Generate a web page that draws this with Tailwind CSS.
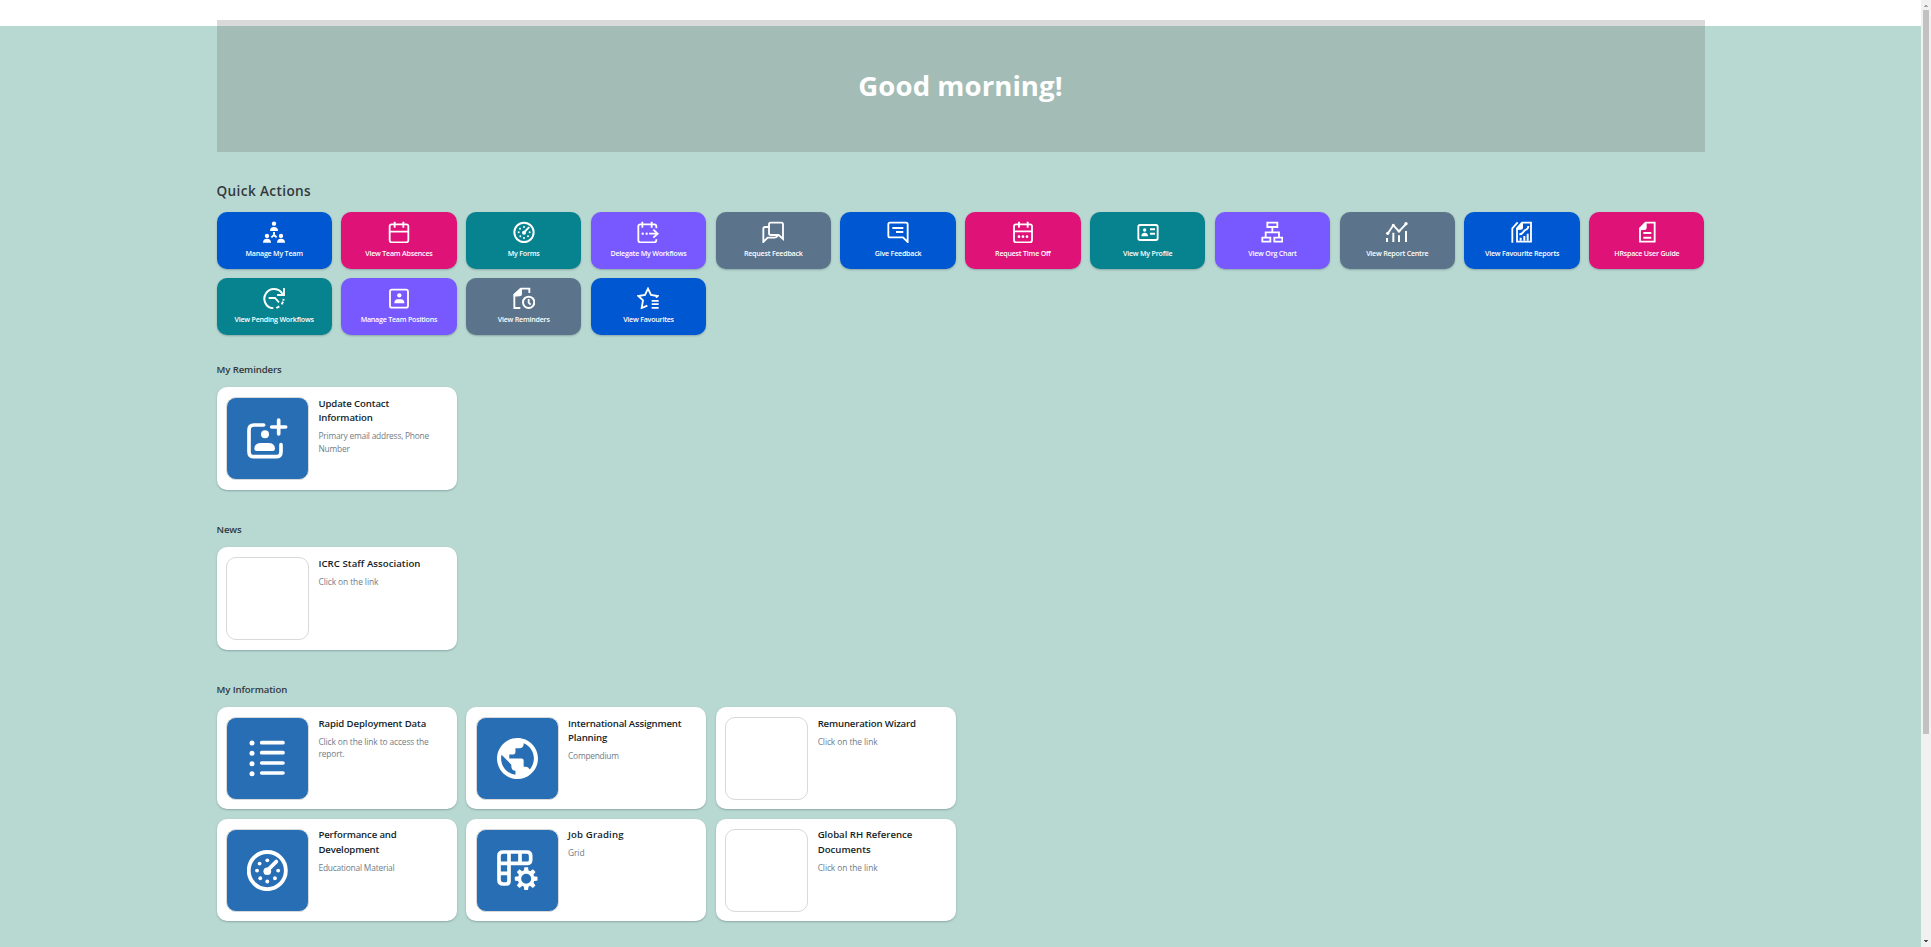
<!DOCTYPE html>
<html lang="en">
<head>
<meta charset="utf-8">
<title>Home</title>
<script src="https://cdn.jsdelivr.net/npm/@tailwindcss/browser@4"></script>
</head>
<body class="h-[947px] overflow-hidden bg-white font-['Open_Sans','Noto_Sans',sans-serif]">
<div class="flex h-[947px]">
<div class="w-[1921px] shrink-0 bg-linear-to-b from-white from-[26px] to-[#b8d9d1] to-[26px] px-[216.5px] pt-5">

<header class="flex h-[132px] items-center justify-center bg-[#676767]/25">
<h1 class="pb-[1px] text-[27.6px] font-bold leading-none text-white tracking-[0.05px]">Good morning!</h1>
</header>

<section class="pt-[29px]">
<h2 class="h-[31px] text-[13.6px] leading-5 font-semibold text-[#32383f] tracking-[0.38px]">Quick Actions</h2>
<div id="tiles" class="grid grid-cols-12 gap-x-[9.6px] gap-y-[9px]"></div>
</section>

<main id="sections"></main>
</div>

<aside class="flex h-full w-[10px] flex-col items-center bg-[#f1f1f1]">
<svg class="mt-[5px] h-[2px] w-[4px] shrink-0" viewBox="0 0 4 2" shape-rendering="crispEdges"><path fill="#a3a3a3" d="M1 0h2v1h1v1H0V1h1z"/></svg>
<div class="mt-[3px] h-[724px] w-[6px] shrink-0 bg-[#c1c1c1]"></div>
<svg class="mt-auto mb-[5px] h-[2px] w-[4px] shrink-0" viewBox="0 0 4 2" shape-rendering="crispEdges"><path fill="#505050" d="M0 0h4v1H3v1H1V1H0z"/></svg>
</aside>
</div>

<script>
const S = 'fill="none" stroke="#fff" stroke-width="6"';
const T = 'fill="none" stroke="#fff" stroke-width="5.5"';
const gauge = `<circle cx="33" cy="34" r="29" ${S}/><path d="M33 34L47 20" ${S} stroke-linecap="round"/><circle cx="33" cy="35" r="6"/><g><circle cx="33" cy="18" r="3"/><circle cx="21" cy="23" r="3"/><circle cx="17" cy="34" r="3"/><circle cx="50" cy="34" r="3"/><circle cx="22" cy="46" r="3"/><circle cx="33" cy="51" r="3"/><circle cx="45" cy="46" r="3"/></g>`;
const icons = {
team: `<circle cx="33" cy="8" r="6.5"/><path d="M21 30q0-12 12-12t12 12zM0 65q0-12 12-12t12 12zM42 65q0-12 12-12t12 12z"/><circle cx="12" cy="45" r="6.5"/><circle cx="54" cy="45" r="6.5"/><path d="M33 33v9L25 49M33 42l8 7" ${T}/>`,
cal: `<path d="M11 10h44q6 0 6 6v42q0 6-6 6H11q-6 0-6-6V16q0-6 6-6zM5 32h56M20 2v18M46 2v18" ${T}/>`,
gauge,
delegate: `<path d="M58 22v-6q0-6-6-6H10q-6 0-6 6v42q0 6 6 6h42q6 0 6-6v-3M16 2v18M44 2v18M36 38h26M49 26l13 12-13 12" ${T}/><circle cx="17" cy="38" r="3.5"/><circle cx="29" cy="38" r="3.5"/>`,
chat: `<path d="M26 5h32q5 0 5 5v44L50 42H26q-5 0-5-5V10q0-5 5-5zM20 18H9q-5 0-5 5v40l13-13h20q6 0 10-6" ${T}/>`,
comment: `<path d="M9 5h48q5 0 5 5v53L48 49H9q-5 0-5-5V10q0-5 5-5z" ${T}/><path d="M16 21h33M27 33h22" ${T}/>`,
caldots: `<path d="M12 10h42q6 0 6 6v42q0 6-6 6H12q-6 0-6-6V16q0-6 6-6zM6 31h54M21 2v18M47 2v18" ${T}/><circle cx="21" cy="47" r="4"/><circle cx="33" cy="47" r="4"/><circle cx="45" cy="47" r="4"/>`,
profile: `<path d="M9 12h48q5 0 5 5v35q0 5-5 5H9q-5 0-5-5V17q0-5 5-5z" ${T}/><circle cx="23" cy="27" r="5"/><path d="M13 46q0-11 10-11t10 11zM39 22h15v6H39zM39 35h15v6H39z"/>`,
org: `<path d="M19 5h30v13H19zM4 50h24v12H4zM40 50h24v12H40zM34 18v16M14 48V34h40v14" ${T}/>`,
report: `<path d="M5 38L22 13l17 18L60 9" ${T}/><circle cx="5" cy="37" r="5"/><circle cx="22" cy="13" r="4.5"/><circle cx="39" cy="30" r="4.5"/><circle cx="60" cy="8" r="5"/><path d="M3 51v12M22 35v28M39 43v20M60 30v33" ${S}/>`,
favrep: `<path d="M18 62V23L33 5h27v57z" ${T}/><path d="M16 27V21L32 4h4v16q0 6-6 6z"/><path d="M4 65V22L20 4" ${T}/><path d="M25 40q8 0 12-7t8-7q6-2 7-11M29 50v9M40 45v14M50 38v21" ${S} stroke-width="5"/>`,
doc: `<path d="M12 62V22L29 5h27v57z" ${T}/><path d="M10 28v-6L28 3h4v17q0 7-7 7zM22 33h24v6H22zM22 47h24v6H22z"/>`,
pending: `<path d="M31 64A29 29 0 1 1 59 22M40 63l9-5M56 52l4-8M61 41l1-5" ${S}/><path d="M63 3v21H42M17 33h19l12 13" ${T}/>`,
position: `<path d="M12 8h42q6 0 6 6v42q0 6-6 6H12q-6 0-6-6V14q0-6 6-6z" ${T}/><circle cx="34" cy="25" r="6.5"/><path d="M19 49q0-12 10-12h10q10 0 10 12z"/>`,
remind: `<path d="M22 63H4V23L24 5h25v13" ${T}/><path d="M2 29v-7L22 3h5v18q0 7-7 7z"/><circle cx="47" cy="46" r="17" ${S}/><path d="M47 36v11l6 6" ${T}/>`,
star: `<path d="M31 56L14 63l4-23L4 27l20-3 9-19 9 19 20 3-5 5" ${T}/><path d="M44 39h21v5H44zM44 49h21v5H44zM44 60h21v5H44z"/>`,
};
const blue='bg-[#0057d2]', pink='bg-[#df1278]', teal='bg-[#07838f]', violet='bg-[#7858ff]', slate='bg-[#5b738b]';
const tiles = [
['Manage My Team',blue,'team'],['View Team Absences',pink,'cal'],['My Forms',teal,'gauge'],['Delegate My Workflows',violet,'delegate'],
['Request Feedback',slate,'chat'],['Give Feedback',blue,'comment'],['Request Time Off',pink,'caldots'],['View My Profile',teal,'profile'],
['View Org Chart',violet,'org'],['View Report Centre',slate,'report'],['View Favourite Reports',blue,'favrep'],['HRspace User Guide',pink,'doc'],
['View Pending Workflows',teal,'pending'],['Manage Team Positions',violet,'position'],['View Reminders',slate,'remind'],['View Favourites',blue,'star'],
];
document.getElementById('tiles').innerHTML = tiles.map(([t,c,i]) => `
<a class="flex h-[57px] flex-col items-center rounded-[10px] pt-[9px] text-white shadow-[0_1px_2px_rgba(34,53,72,0.3)] ${c}">
<svg class="h-[22px] w-[22px]" viewBox="0 0 66 66" fill="#fff">${icons[i]}</svg>
<span class="mt-[5px] text-[7.1px] leading-[10px] font-semibold whitespace-nowrap tracking-[-0.22px]">${t}</span>
</a>`).join('');

const B = 'fill="none" stroke="#fff" stroke-width="11" stroke-linecap="round"';
const teeth = [0,45,90,135,180,225,270,315].map(a => `<path d="M82 52h11l2 12H80z" transform="rotate(${a} 87.5 86)"/>`).join('');
const big = {
contact: `<path d="M50 21H21q-15 0-15 15v65q0 15 15 15h66q15 0 15-15V80" ${B}/><circle cx="54" cy="49" r="12"/><path d="M22 92q0-17 21-17h21q20 0 20 17q0 7-7 7H29q-7 0-7-7z"/><path d="M95 6v42M74 27h42" ${B}/>`,
list: `<circle cx="15" cy="15" r="7.5"/><circle cx="15" cy="46" r="7.5"/><circle cx="15" cy="77" r="7.5"/><circle cx="15" cy="107" r="7.5"/><path d="M44 14h64M44 44h64M44 75h64M44 105h64" ${B}/>`,
globe: `<path transform="scale(6.15) translate(-2 -2)" d="M12 2C6.48 2 2 6.48 2 12s4.48 10 10 10 10-4.48 10-10S17.52 2 12 2zm-1 17.93c-3.95-.49-7-3.85-7-7.93 0-.62.08-1.21.21-1.79L9 15v1c0 1.1.9 2 2 2v1.93zm6.9-2.54c-.26-.81-1-1.39-1.9-1.39h-1v-3c0-.55-.45-1-1-1H8v-2h2c.55 0 1-.45 1-1V7h2c1.1 0 2-.9 2-2v-.41c2.93 1.19 5 4.06 5 7.41 0 2.08-.8 3.97-2.1 5.39z"/>`,
gauge: `<g transform="translate(-2.5 -3.5) scale(1.92)">${gauge}</g>`,
grid: `<path d="M18 6h72q11 0 11 11v14q0 9-9 9H36v53q0 9-9 9h-9q-12 0-12-12V17Q6 6 18 6zM36 6v34M69 6v34M6 40h30M6 70h30" ${B}/><circle cx="87.5" cy="86" r="20" fill="none" stroke="#fff" stroke-width="10"/>${teeth}`,
};
// Each card: title, description, icon, title tracking, description tracking (px)
const sections = [
['My Reminders',[['Update Contact<br>Information','Primary email address, Phone<br>Number','contact',-.12,-.22]]],
['News',[['ICRC Staff Association','Click on the link','',.06,-.08]]],
['My Information',[['Rapid Deployment Data','Click on the link to access the<br>report.','list',-.11,-.12],['International Assignment<br>Planning','Compendium','globe',-.18,-.25],['Remuneration Wizard','Click on the link','',-.16,-.08],
['Performance and<br>Development','Educational Material','gauge',-.14,-.2],['Job Grading','Grid','grid',.15,-.1],['Global RH Reference<br>Documents','Click on the link','',0,-.08]]],
];
document.getElementById('sections').innerHTML = sections.map(([h,cards],n) => `
<section class="${n ? 'pt-[31px]' : 'pt-[26px]'}">
<h3 class="h-[26px] pt-[1px] text-[9.6px] leading-4 font-semibold text-[#32383f] tracking-[-0.1px]">${h}</h3>
<div class="grid grid-cols-[240px_240px_240px] gap-[9.6px]">${cards.map(([t,s,i,a,b],k) => `
<a class="flex ${n < 2 ? 'h-[103px]' : 'h-[102.4px]'} gap-[9.2px] rounded-[10px] bg-white p-[9.6px] shadow-[0_1px_2px_rgba(34,53,72,0.3)]">
<div class="flex h-[83.2px] w-[83.2px] shrink-0 items-center justify-center rounded-[10px] border border-[#d9d9d9] ${i ? 'bg-[#286eb4]' : ''}">${i ? `<svg class="h-[41px] w-[41px]" viewBox="0 0 123 123" fill="#fff">${big[i]}</svg>` : ''}</div>
<div>
<h4 class="${k > 2 ? '-mt-[1.2px] leading-[15px]' : 'leading-[14.2px]'} text-[9.6px] font-semibold whitespace-nowrap text-[#131e29]" style="letter-spacing:${a}px">${t}</h4>
<p class="mt-[5px] text-[8.4px] leading-[12.6px] whitespace-nowrap text-[#6f7c89]" style="letter-spacing:${b}px">${s}</p>
</div>
</a>`).join('')}</div>
</section>`).join('');
</script>
</body>
</html>
